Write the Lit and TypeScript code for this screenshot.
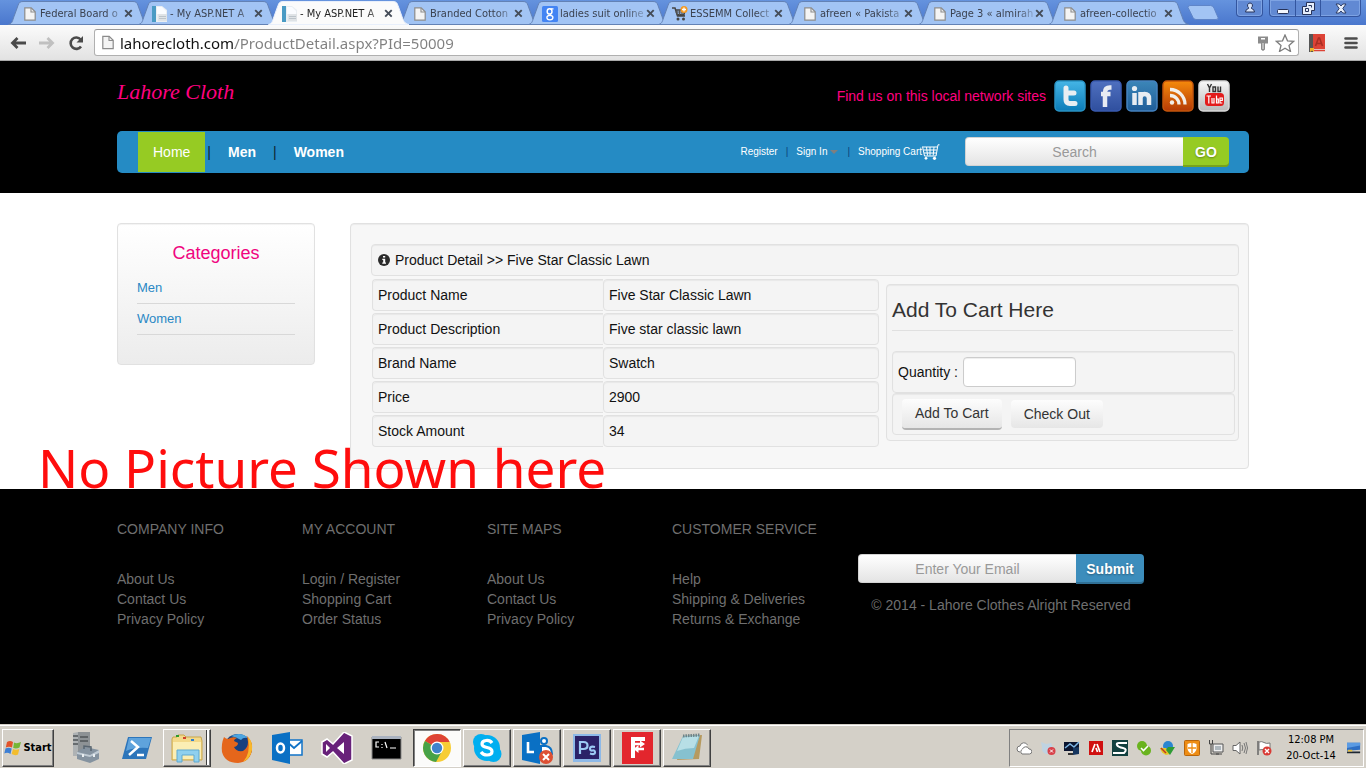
import { LitElement, html, css, svg } from "lit";
import { customElement } from "lit/decorators.js";
import { classMap } from "lit/directives/class-map.js";

const box = (w: number, h: number, body: unknown) =>
  html`<svg width=${w} height=${h} viewBox="0 0 ${w} ${h}" aria-hidden="true">${body}</svg>`;

/* ---------- tab favicons ---------- */
const page = (w = 12, h = 14) => html`<svg width=${w} height=${h} viewBox="0 0 12 14" aria-hidden="true">
  <path d="M.8.8h6.4l4 4v8.4H.8z" fill="#f4f4f4" stroke="#8b8b8b" stroke-width="1.2"/>
  <path d="M7 1v4h4" fill="none" stroke="#8b8b8b" stroke-width="1.1"/></svg>`;
const asp = box(16, 16, svg`
  <path d="M0 0h10l5 4v12H0z" fill="#e9eef2"/><path d="M0 0h4v16H0z" fill="#4a9bc4"/>
  <path d="M5 1h5l4 4v3H5z" fill="#fafcff"/><path d="M6 8h9v7H6z" fill="#dfe3e6"/><path d="M7 10h7v1H7zM7 12h7v1H7z" fill="#bcc4ca"/>`);
const google = box(16, 16, svg`
  <rect width="16" height="16" rx="1.5" fill="#4384f3"/>
  <ellipse cx="7.6" cy="5.4" rx="2.4" ry="2.6" fill="none" stroke="#fff" stroke-width="1.5"/>
  <ellipse cx="7.9" cy="11.6" rx="3" ry="2.2" fill="none" stroke="#fff" stroke-width="1.3"/>
  <path d="M8 8.2l1 1.2M8.5 2.8h3" stroke="#fff" stroke-width="1.2"/>`);
const cartFav = box(16, 16, svg`
  <path d="M0 2h3l2.500 8H13M3.500 4H13l-1 4.500H4.800" fill="none" stroke="#444" stroke-width="1.500"/>
  <path d="M5 4v5M7.500 4v5M10 4v5M3.500 6H13" stroke="#555"/>
  <circle cx="6" cy="13" r="1.500" fill="#444"/><circle cx="11.500" cy="13" r="1.500" fill="#444"/>
  <circle cx="12" cy="3.500" r="3.500" fill="#f59a23"/><path d="M12 1.500v4M10 3.500h4" stroke="#fff" stroke-width="1.300"/>`);

const TABS = [
  { title: "Federal Board o", icon: page() },
  { title: "- My ASP.NET A", icon: asp },
  { title: "- My ASP.NET A", icon: asp, active: true },
  { title: "Branded Cotton", icon: page() },
  { title: "ladies suit online", icon: google },
  { title: "ESSEMM Collect", icon: cartFav },
  { title: "afreen « Pakista", icon: page() },
  { title: "Page 3 « almirah", icon: page() },
  { title: "afreen-collectio", icon: page() },
];

@customElement("browser-chrome")
class BrowserChrome extends LitElement {
  static styles = css`
    :host { display: block; font-family: "DejaVu Sans Condensed", "Noto Sans", sans-serif; }
    svg { display: block; }
    button { border: 0; padding: 0; background: none; display: grid; place-items: center; }
    .strip { display: flex; height: 25px; padding-left: 8px; background: linear-gradient(#6593de, #4a77cd); }
    .tabs { display: flex; }
    .tab { position: relative; width: 130px; height: 25px; display: flex; align-items: center; gap: 2px;
      padding: 2px 5px 0 14px; box-sizing: border-box; font-size: 11px; color: #3b4250; }
    .tab.active { z-index: 2; color: #222; }
    .shape { position: absolute; left: 0; top: 0; width: 143px; height: 25px; }
    .icon { position: relative; flex: none; width: 16px; display: grid; place-items: center; }
    .title { position: relative; flex: 1; white-space: nowrap; line-height: 16px;
      mask-image: linear-gradient(to right, #000 80%, #0004 100%); }
    .close { position: relative; flex: none; width: 9px; height: 9px; }
    .new { margin: 0 0 0 9px; align-self: flex-start; padding-top: 5px; }
    .win { margin-left: auto; display: flex; gap: 6px; padding-right: 5px; height: 17px; }
    .group { display: flex; border: 1px solid #33559f; border-top: 0; border-radius: 0 0 4px 4px; background: #6189d3;
      box-shadow: inset 0 0 0 1px #7ea3e3; }
    .group button { width: 25px; height: 16px; }
    .group .wide { width: 40px; }
    .group button + button { border-left: 1px solid #33559f; }
    .bar { display: flex; align-items: center; height: 36px; box-sizing: border-box; padding: 0 8px;
      background: linear-gradient(#fbfbfb, #e2e2e2); border-bottom: 1px solid #a9a9a9; }
    .nav { width: 20px; height: 20px; margin-right: 9px; }
    .nav:nth-child(3) { margin-right: 8px; }
    .field { flex: 1; display: flex; align-items: center; gap: 6px; height: 27px; box-sizing: border-box; padding: 0 3px 0 7px;
      border: 1px solid #b0b0b0; border-top-color: #989898; border-radius: 3px; background: #fff; }
    .url { flex: 1; border: 0; padding: 0; height: 24px; outline: 0; font: 15px "Noto Sans", sans-serif;
      color: transparent; background: linear-gradient(to right, #111 115px, #808080 115px); background-clip: text; -webkit-background-clip: text; }
    .dict { margin: 0 19px 0 10px; }
  `;

  render() {
    return html`
      <div class="strip">
        <div class="tabs">${TABS.map((t) => html`
          <div class=${classMap({ tab: true, active: !!t.active })}>
            <svg class="shape" viewBox="0 0 143 25" aria-hidden="true">
              <path d="M.5 24.5c4-1 4-4 5.500-8l4-11c1-3 2-4 5-4h110c3 0 4 1 5 4l4 11c1.500 4 2 7 7 8z"
                fill=${t.active ? "#fbfbfb" : "#a2c4f4"} stroke=${t.active ? "#e8effb" : "#6382b5"}/>
            </svg>
            <span class="icon">${t.icon}</span>
            <span class="title">${t.title}</span>
            <button class="close" aria-label="Close tab">${box(9, 9, svg`<path d="M1.200 1.200l6.500 6.500M7.700 1.200l-6.500 6.500" stroke="#444c58" stroke-width="1.900"/>`)}</button>
          </div>`)}
        </div>
        <button class="new" aria-label="New tab">${box(34, 16, svg`<path d="M1 2.500q0-2 2-2h20.500q2.500 0 3.500 2.500l4 9.500q.8 2-2 2H9q-2 0-3-2z" fill="#a2c4f4" stroke="#5f85c8"/>`)}</button>
        <div class="win">
          <div class="group"><button aria-label="Profile">${box(12, 12, svg`<path d="M6 1a2.500 2.500 0 0 1 1.500 4.500v1q3 .8 3 3.500h-9q0-2.700 3-3.500v-1A2.500 2.500 0 0 1 6 1z" fill="#d8e4fa" stroke="#26335a"/>`)}</button></div>
          <div class="group">
            <button aria-label="Minimize">${box(12, 12, svg`<rect x=".5" y="7.500" width="11" height="4" rx="1" fill="#f3f6fd" stroke="#26335a"/>`)}</button>
            <button aria-label="Restore">${box(13, 13, svg`<path d="M4.500.5h8v8h-3v4h-9v-8h4z" fill="#e6eefc" stroke="#26335a"/><path d="M3.500 6.500h3v3h-3zM6.500 3.500h3v2" fill="none" stroke="#26335a"/>`)}</button>
            <button class="wide" aria-label="Close">${box(12, 11, svg`<path d="M1 1h3.200L6 3l1.800-2H11L7.800 5.500 11 10H7.800L6 8l-1.800 2H1l3.200-4.500z" fill="#e6eefc" stroke="#26335a" stroke-width=".9"/>`)}</button>
          </div>
        </div>
      </div>
      <div class="bar">
        <button class="nav" aria-label="Back">${box(18, 16, svg`<path d="M17 8H4M8.500 3L3.500 8l5 5" fill="none" stroke="#4a4a4a" stroke-width="2.800"/>`)}</button>
        <button class="nav" aria-label="Forward">${box(18, 16, svg`<path d="M1 8h13M9.500 3l5 5-5 5" fill="none" stroke="#c0c0c0" stroke-width="2.800"/>`)}</button>
        <button class="nav" aria-label="Reload">${box(18, 18, svg`<path d="M14 12.500a5.700 5.700 0 1 1-.3-7" fill="none" stroke="#4a4a4a" stroke-width="2.600"/><path d="M16 2v6.500H9.500z" fill="#4a4a4a"/>`)}</button>
        <div class="field">
          ${page(12, 15)}
          <input class="url" aria-label="Address" value="lahorecloth.com/ProductDetail.aspx?PId=50009">
          ${box(12, 16, svg`<path d="M1 1.500h10v7H8v6l-2 1.500-2-1.500v-6H1z" fill="#8b8b8b"/><path d="M4 3h4v1.500H4z" fill="#fff"/><path d="M6 8v6" stroke="#eee"/>`)}
          ${box(20, 18, svg`<path d="M10 1l2.500 5.800 6.200.5-4.700 4.100 1.500 6.100L10 14.300l-5.500 3.200L6 11.400 1.300 7.300l6.200-.5z" fill="#fff" stroke="#7d7d7d" stroke-width="1.300"/>`)}
        </div>
        <button class="dict" aria-label="Dictionary">${box(16, 18, svg`<path d="M0 0h4v18H0z" fill="#555"/><path d="M4 0h12v15H4z" fill="#dd4336"/><path d="M5 16.500h11" stroke="#dd4336" stroke-width="1.500"/><path d="M6.500 12l3-8h1l3 8M7.500 9.500h5" fill="none" stroke="#a92e24" stroke-width="1.600"/><path d="M1 14h4v4l-2-1.500L1 18z" fill="#f0b429"/>`)}</button>
        <button aria-label="Menu">${box(14, 14, svg`<path d="M1.500 2.500h11M1.500 7h11M1.500 11.500h11" stroke="#4c4c4c" stroke-width="2.600" stroke-linecap="round"/>`)}</button>
      </div>`;
  }
}

/* ---------- social badges ---------- */
const badge = (id: string, a: string, b: string, edge: string, body: unknown) => box(32, 32, svg`
  <defs><linearGradient id=${id} x2="0" y2="1"><stop stop-color=${a}/><stop offset="1" stop-color=${b}/></linearGradient></defs>
  <rect x="1" y="1" width="30" height="30" rx="4" fill="url(#${id})" stroke=${edge} stroke-width="1.500"/>${body}`);

const SOCIAL = [
  { name: "Twitter", icon: badge("tw", "#45b5e6", "#0b7cb8", "#2a93c4", svg`<path d="M12 8v11.500q0 4 4 4h5M12 13h8" fill="none" stroke="#e8eef2" stroke-width="5" stroke-linecap="round" stroke-linejoin="round"/>`) },
  { name: "Facebook", icon: badge("fb", "#4f70bf", "#2f4f9e", "#3a5bb0", svg`<path d="M15 27V12.500q0-5 5-5h1.500M11 14h9.500" fill="none" stroke="#e8ebf2" stroke-width="4.500"/>`) },
  { name: "LinkedIn", icon: badge("li", "#3c86b8", "#1f5d99", "#4583c0", svg`<path d="M8.500 13v12M14.500 12v13M14.500 18q0-4 4-4 4.500 0 4.500 4.500V25" fill="none" stroke="#e8edf2" stroke-width="4.500"/><circle cx="8.500" cy="8.500" r="2.600" fill="#e8edf2"/>`) },
  { name: "RSS", icon: badge("rs", "#f58a0c", "#b53a06", "#c4560c", svg`<circle cx="10" cy="22.500" r="2.200" fill="#f2eeea"/><path d="M8 15.500a9 9 0 0 1 9 9M8 9.500a15 15 0 0 1 15 15" fill="none" stroke="#f2eeea" stroke-width="3.300"/>`) },
  { name: "YouTube", icon: badge("yt", "#f8f8f8", "#b9b9b9", "#dadada", svg`<rect x="7" y="13" width="19" height="13" rx="3.500" fill="#e31b1b"/>
    <path d="M9.500 4l2 4v4M13.500 4l-2 4M15 7h2.500v4.500H15zM20 6.500v5h2.500v-5" fill="none" stroke="#333" stroke-width="1.400"/>
    <path d="M8.500 16h4.500M10.800 16v7.500M14 18v5h2v-5M18.500 15.500v7.500h1.800v-4h-1.800M22 20.500h2.300V18H22v5h2.300" fill="none" stroke="#fff" stroke-width="1.200"/>`) },
];

const cartIcon = box(18, 16, svg`<path d="M.5 2.500L2.500 12H14L16 .8h1.500M.8 3h14.500M1.500 6h13.300M2 9h12.200M4.500 3l1 8.500M8 3v8.500M12 3l-.8 8.500" fill="none" stroke="#fff"/><circle cx="4" cy="14.300" r="1.400" fill="#fff"/><circle cx="12.500" cy="14.300" r="1.600" fill="#fff"/>`);
const infoIcon = box(12, 12, svg`<circle cx="6" cy="6" r="6" fill="#2b2b2b"/><path d="M5 2h2.200v1.600H5zM4.300 4.800h2.900v3.600H8V9.700H4.300V8.400h.9V6h-.9z" fill="#fff"/>`);

const DETAILS: [string, string][] = [
  ["Product Name", "Five Star Classic Lawn"],
  ["Product Description", "Five star classic lawn"],
  ["Brand Name", "Swatch"],
  ["Price", "2900"],
  ["Stock Amount", "34"],
];

const COLUMNS = [
  { head: "COMPANY INFO", links: ["About Us", "Contact Us", "Privacy Policy"] },
  { head: "MY ACCOUNT", links: ["Login / Register", "Shopping Cart", "Order Status"] },
  { head: "SITE MAPS", links: ["About Us", "Contact Us", "Privacy Policy"] },
  { head: "CUSTOMER SERVICE", links: ["Help", "Shipping & Deliveries", "Returns & Exchange"] },
];

@customElement("shop-page")
class ShopPage extends LitElement {
  static styles = css`
    :host { display: flex; flex-direction: column; background: #fff; color: #111;
      font: 14px/20px "Liberation Sans", Arial, sans-serif; }
    svg { display: block; }
    a { color: inherit; text-decoration: none; }
    h1, h2, h3, ul, p { margin: 0; padding: 0; font-weight: 400; list-style: none; }
    input, button { font: inherit; margin: 0; box-sizing: border-box; }
    .wrap { max-width: 1132px; margin: 0 auto; }
    .head { background: #000; padding: 0 20px 20px; }
    .top { display: flex; align-items: center; justify-content: space-between; height: 70px; padding-right: 19px; }
    .logo { font: italic 22px/30px "Liberation Serif", serif; color: #ff0080; padding-bottom: 8px; }
    .social { display: flex; align-items: center; gap: 4px; color: #ff0080; }
    .social span { margin-right: 4px; }
    .nav { display: flex; align-items: center; height: 42px; padding: 0 20px; background: #258bc4; border-radius: 5px; }
    .nav a { color: #fff; }
    .menu { display: flex; align-items: center; font-weight: 700; }
    .menu a { padding: 0 15px; line-height: 40px; }
    .menu a.on { background: #96cb23; font-weight: 400; margin-left: 1px; }
    .sep { color: #0d2230; font-weight: 400; padding: 0 2px; }
    .user { display: flex; align-items: center; gap: 6px; margin-left: auto; font-size: 10px; }
    .user a { display: flex; align-items: center; }
    .user .sep { color: #0b3f7a; }
    .caret { border: 4px solid transparent; border-top-color: #7f7f7f; border-bottom: 0; margin: 0 1px 0 3px; }
    .combo { display: flex; }
    .combo input { width: 218px; height: 29px; border: 1px solid #d3d3d3; border-right: 0; border-radius: 4px 0 0 4px; padding: 0 8px;
      text-align: center; background: linear-gradient(#fff, #e4e4e4); outline: 0; }
    .combo input::placeholder { color: #999; opacity: 1; }
    .combo button { height: 30px; border: 0; border-radius: 0 4px 4px 0; padding: 0; font-weight: 700; color: #fff;
      text-shadow: 0 1px 2px #0005; box-shadow: inset 0 -2px #0003; }
    .go { width: 46px; background: #96cb23; }
    .send { width: 68px; background: #3c8dbc; }
    .nav .combo { margin-left: 25px; }
    .body { position: relative; padding: 30px 20px 20px; }
    .cols { display: grid; grid-template-columns: 198px 1fr; gap: 35px; align-items: start; }
    .well { border: 1px solid #e1e1e1; border-radius: 4px; box-shadow: inset 0 1px 1px #0000000d; box-sizing: border-box; }
    .side { padding: 19px 19px 29px; background: linear-gradient(#fff, #ececec); }
    .side h2 { font-size: 18px; text-align: center; color: #f0047f; }
    .side ul { padding-top: 10px; }
    .side li { font-size: 13px; line-height: 30px; border-bottom: 1px solid #d8d8d8; color: #2a88c5; }
    .panel { padding: 20px 9px 19px 20px; background: #f7f7f7; }
    .crumb { display: flex; align-items: center; gap: 5px; height: 32px; padding: 0 6px; background: #f4f4f4; }
    .split { display: grid; grid-template-columns: 507px 1fr; gap: 7px; align-items: start; padding-left: 1px; }
    table { border-collapse: separate; border-spacing: 0 2px; width: 100%; margin-top: 1px; table-layout: fixed; }
    th, td { height: 30px; padding: 0 5px; border: 1px solid #e1e1e1; background: #f4f4f4; text-align: left; font-weight: 400;
      box-shadow: inset 0 1px 1px #0000000d; }
    th { width: 220px; border-right: 0; border-radius: 4px 0 0 4px; }
    td { border-radius: 4px; }
    .cart { margin-top: 8px; padding: 15px 3px 5px 5px; background: #f4f4f4; }
    .cart h3 { font-size: 21px; color: #333; padding-bottom: 10px; margin: 0 2px 20px 0; border-bottom: 1px solid #e0e0e0; }
    .row { display: flex; align-items: center; height: 42px; padding: 0 5px; gap: 5px; }
    .qty { width: 113px; height: 30px; border: 1px solid #ccc; border-radius: 4px; background: #fff; padding: 4px 6px; box-shadow: inset 0 1px 1px #00000013; }
    .acts { gap: 9px; padding: 0 9px; }
    .btn { border: 0; border-radius: 4px; padding: 0 13px; color: #333; height: 28px; background: linear-gradient(#fdfdfd, #e6e6e6); }
    .btn.main { height: 31px; border-bottom: 2px solid #b3b3b3; }
    .note { position: absolute; left: 38px; bottom: -14px; font: 53px/70px "Noto Sans", sans-serif; color: #ff0d0d; white-space: nowrap; }
    .foot { flex: 1; background: #000; color: #6f6f6f; padding: 30px 20px; }
    .fcols { display: grid; grid-template-columns: repeat(4, 185px) 288px; }
    .fcols h3 { font-size: 14px; padding-bottom: 30px; }
    .mail { padding-top: 35px; text-align: center; }
    .mail .combo { padding-left: 1px; }
    .mail p { padding-top: 11px; }
  `;

  render() {
    return html`
      <header class="head"><div class="wrap">
        <div class="top">
          <h1 class="logo">Lahore Cloth</h1>
          <div class="social"><span>Find us on this local network sites</span>
            ${SOCIAL.map((s) => html`<a href="#" aria-label=${s.name}>${s.icon}</a>`)}</div>
        </div>
        <nav class="nav">
          <div class="menu"><a class="on" href="#">Home</a><span class="sep">|</span><a href="#">Men</a><span class="sep">|</span><a href="#">Women</a></div>
          <div class="user"><a href="#">Register</a><span class="sep">|</span><a href="#">Sign In<i class="caret"></i></a><span class="sep">|</span><a href="#">Shopping Cart ${cartIcon}</a></div>
          <form class="combo"><input aria-label="Search" placeholder="Search"><button type="button" class="go">GO</button></form>
        </nav>
      </div></header>
      <main class="body">
        <div class="wrap cols">
          <aside class="well side"><h2>Categories</h2><ul><li><a href="#">Men</a></li><li><a href="#">Women</a></li></ul></aside>
          <section class="well panel">
            <div class="well crumb">${infoIcon}<span>Product Detail &gt;&gt; Five Star Classic Lawn</span></div>
            <div class="split">
              <table><tbody>${DETAILS.map(([k, v]) => html`<tr><th scope="row">${k}</th><td>${v}</td></tr>`)}</tbody></table>
              <form class="well cart">
                <h3>Add To Cart Here</h3>
                <div class="well row"><label for="qty">Quantity :</label><input id="qty" class="qty"></div>
                <div class="well row acts"><button type="button" class="btn main">Add To Cart</button><button type="button" class="btn">Check Out</button></div>
              </form>
            </div>
          </section>
        </div>
        <p class="note">No Picture Shown here</p>
      </main>
      <footer class="foot"><div class="wrap fcols">
        ${COLUMNS.map((c) => html`<div><h3>${c.head}</h3><ul>${c.links.map((l) => html`<li><a href="#">${l}</a></li>`)}</ul></div>`)}
        <div class="mail"><form class="combo"><input type="email" aria-label="Email" placeholder="Enter Your Email"><button type="button" class="send">Submit</button></form>
          <p>© 2014 - Lahore Clothes Alright Reserved</p></div>
      </div></footer>`;
  }
}

/* ---------- taskbar ---------- */
const APPS: { name: string; state?: string; icon: unknown }[] = [
  { name: "Server Manager", icon: svg`<path d="M2 1l5-1h12v24H2z" fill="#aeb2b4"/><path d="M7 0h12v24H7z" fill="#8d9295"/><path d="M2 4h5M2 8h5M2 12h5M9 5h8M9 9h8" stroke="#505558" stroke-width="1.500"/><path d="M6 20l8-5 14 3v9l-9 4-13-4z" fill="#8593a0"/><path d="M6 20l13 3 9-5v3l-9 4-13-3z" fill="#c0cbd4"/><path d="M13 17v-3l7 1v4" fill="none" stroke="#586570" stroke-width="1.500"/><path d="M12 22v3M23 22v3" stroke="#e8edf0" stroke-width="2"/>` },
  { name: "PowerShell", icon: svg`<path d="M7 5h24l-6 22H1z" fill="#2d75ba"/><path d="M8 6h22l-3 10Q14 15 5 19z" fill="#5fa3dc"/><path d="M10 9l7 6-9 8M16 23h7" fill="none" stroke="#fff" stroke-width="2.500"/>` },
  { name: "Explorer", state: "stack", icon: svg`<path d="M2 5h4l1-2h6l2 2h15l1 4v19H1V7z" fill="#f3d98a" stroke="#c9a74a"/><path d="M2 10h28v17H2z" fill="#fbeeb4"/><path d="M5 3h3v2H5z" fill="#2c9b2c"/><path d="M12 5h3v2h-3z" fill="#d0402c"/><path d="M20 7h3v2h-3z" fill="#2e7fd0"/><path d="M6 30V18h22v12h-5v-7H11v7z" fill="#8fd0ee" stroke="#5ea9d0"/>` },
  { name: "Firefox", icon: svg`<circle cx="17" cy="16" r="14" fill="#17407f"/><path d="M10 4q10-5 17 2-5-1-7 2-5-3-10-4z" fill="#4da5e0"/><path d="M3 5q2 2 4 2 5-3 9-1-3 1-3 3l4 2q0 3-4 4 2 5 9 4 5-3 5-9l-1-6q6 6 5 14-2 12-14 13Q4 31 1 20 0 12 3 5z" fill="#e5661b"/><path d="M27 5q5 5 4 13-2 9-9 12 8-8 5-25z" fill="#f8b72b"/>` },
  { name: "Outlook", icon: svg`<path d="M14 8h17v15H14z" fill="#fff" stroke="#1173c7" stroke-width="1.500"/><path d="M15 9l8 7 8-7" fill="none" stroke="#1173c7" stroke-width="1.800"/><path d="M1 3l18-3v32L1 28z" fill="#0a70c4"/><ellipse cx="9.500" cy="16" rx="3.500" ry="4.500" fill="none" stroke="#fff" stroke-width="2.500"/>` },
  { name: "Visual Studio", icon: svg`<path d="M23 0l8 4v24l-8 4L12 20l-6 5-5-3V10l5-3 6 5z" fill="#68217a" stroke="#fff" stroke-width="1.500"/><path d="M5 12v8l4-4zM23 10v12l-7-6z" fill="#fff"/>` },
  { name: "Command Prompt", icon: svg`<path d="M1 5h29v22H1z" fill="#000" stroke="#888"/><path d="M1 4h29v3H1z" fill="#aab2bf"/><path d="M8 10H5v5h3M11 12v1M11 15v1M14 10l2 6M19 16h6" fill="none" stroke="#fff" stroke-width="1.200"/>` },
  { name: "Chrome", state: "down", icon: svg`<circle cx="16" cy="16" r="14" fill="#f7cd35"/><path d="M16 16L3.900 9A14 14 0 0 1 28.600 10H16z" fill="#de4335"/><path d="M3.900 9A14 14 0 0 0 15 30l6-11-5-3z" fill="#47a247"/><circle cx="16" cy="16" r="6.500" fill="#fff"/><circle cx="16" cy="16" r="5.200" fill="#3f83cc"/>` },
  { name: "Skype", state: "open", icon: svg`<circle cx="16" cy="16" r="13" fill="#00aff0"/><circle cx="10" cy="10" r="8" fill="#00aff0"/><circle cx="22.500" cy="22" r="8" fill="#00aff0"/><path d="M21 11q-2-3-6-2.500-4 .5-4 3.500 0 2.500 5 3.500t5 4q0 3.500-5 3.500-4 0-6-3" fill="none" stroke="#fff" stroke-width="3.200"/>` },
  { name: "Lync", state: "open", icon: svg`<path d="M1 3l18-3v32L1 28z" fill="#0a70c4"/><path d="M7 10v10h6" fill="none" stroke="#fff" stroke-width="2.600"/><circle cx="23" cy="9" r="3" fill="#fff" stroke="#0a70c4" stroke-width="2"/><path d="M20 14h5q6 1 6 8l-4 4h-7z" fill="#fff" stroke="#0a70c4" stroke-width="2"/><circle cx="25" cy="25" r="7" fill="#dd5033"/><path d="M22 22l6 6M28 22l-6 6" stroke="#fff" stroke-width="2"/>` },
  { name: "Photoshop", state: "open", icon: svg`<path d="M2 2h28v28H2z" fill="#8db9e8"/><path d="M4 4h24v23H4z" fill="#2b2268"/><path d="M9 22V10h3.500q4 0 4 3.500t-4 3.500H9M24 15q-5-1-5 1.500t2.500 2 2.500 2-5 1" fill="none" stroke="#9ccbf5" stroke-width="2.200"/>` },
  { name: "FileZilla", state: "open", icon: svg`<path d="M1 0h31v32H1z" fill="#e3262d"/><path d="M10 5h14v4H14v17h-4z" fill="#fff"/><path d="M14 12h6M15 17h8" stroke="#fff" stroke-width="2.500"/><path d="M19 8.500l5 3.500-5 3.500zM17.500 13l-5 4 5 4z" fill="#fff"/>` },
  { name: "Notepad", state: "open", icon: svg`<path d="M12 4l19-1-3 24-22 1z" fill="#b69a5f"/><path d="M12 4l17-1-7 24H1z" fill="#86c1cf"/><path d="M12 5l16-1-5 12q-9 0-17 3z" fill="#b7dfe6"/><path d="M12 4l17-1" stroke="#6f8388" stroke-width="3" stroke-dasharray="1.500 1"/>` },
];

const TRAY: { name: string; icon: unknown }[] = [
  { name: "OneDrive", icon: svg`<path d="M4 12a3 3 0 0 1 0-6 4 4 0 0 1 7.500-1" fill="#fff" stroke="#777"/><path d="M6 14a3 3 0 0 1 .5-5 3.500 3.500 0 0 1 6.500 0 2.500 2.500 0 0 1 .5 5z" fill="#fff" stroke="#777"/>` },
  { name: "Cloud sync", icon: svg`<path d="M1 2l5 2 5-1 2 5-3 6H6Q1 12 2 7z" fill="#bfd3e2"/><circle cx="11.500" cy="11" r="4" fill="#d8414a"/><path d="M10 9.500l3 3M13 9.500l-3 3" stroke="#fff"/>` },
  { name: "Display", icon: svg`<path d="M0 2h15v9H0z" fill="#0b1530"/><path d="M1 8l5-4 4 3 5-5" fill="none" stroke="#7db7e6" stroke-width="1.500"/><path d="M9 8l6-1v7l-6 1z" fill="#16365f"/><path d="M4 13h5v2H4z" fill="#333"/>` },
  { name: "Adobe", icon: svg`<path d="M1 1h14v14H1z" fill="#d01010"/><path d="M4 12l3-8M12 12L9 4M8 8l1.500 4" stroke="#fff" stroke-width="1.700"/>` },
  { name: "Sync tool", icon: svg`<path d="M0 0h16v16H0z" fill="#12403f"/><path d="M15 3H7Q4 3 5 5t6 3 1 5H1" fill="none" stroke="#fff" stroke-width="2"/>` },
  { name: "Skype for work", icon: svg`<circle cx="6" cy="6" r="5" fill="#69b31e"/><circle cx="10" cy="10.500" r="5" fill="#69b31e"/><path d="M5 8l2.500 2.500L12 6" fill="none" stroke="#fff" stroke-width="1.600"/>` },
  { name: "Download manager", icon: svg`<circle cx="8" cy="6" r="5" fill="#2b86d0"/><path d="M0 8h6l4 6-4 1Q1 13 0 8z" fill="#e6c628"/><path d="M8 7h7l-5 8-4-5z" fill="#2f9c35"/><path d="M1 8l5 5" stroke="#c03a20" stroke-width="1.500"/>` },
  { name: "Security", icon: svg`<rect x=".5" y=".5" width="15" height="15" rx="1" fill="#ee8d14" stroke="#b9650a"/><path d="M3.500 4q4.500-2 9 0v4q0 4-4.500 6-4.500-2-4.500-6z" fill="#fff"/><path d="M8 3v10M4 8h8" stroke="#ee8d14" stroke-width="1.300"/>` },
  { name: "Network", icon: svg`<path d="M5 4h10v8H5z" fill="#eee" stroke="#555"/><path d="M7 6h6v4H7z" fill="#aeb7bd"/><path d="M1.500 0v4h3V0M3 4v10h8M8 14h6" fill="none" stroke="#444"/>` },
  { name: "Volume", icon: svg`<path d="M1 5.500h3L8 2v12l-4-3.500H1z" fill="#fff" stroke="#666"/><path d="M10 5q1.500 3 0 6M12 3q3 5 0 10M14 2q3 6 0 12" fill="none" stroke="#777"/>` },
  { name: "Action Center", icon: svg`<path d="M2 1v14" stroke="#666" stroke-width="1.500"/><path d="M3 2q3-1 5 .5t6 .5v7q-3 1-5.500 0T3 10z" fill="#fff" stroke="#777"/><circle cx="11" cy="11" r="4.500" fill="#d93a34"/><path d="M9 9l4 4M13 9l-4 4" stroke="#fff" stroke-width="1.400"/>` },
];

@customElement("task-bar")
class TaskBar extends LitElement {
  static styles = css`
    :host { display: flex; align-items: center; height: 44px; box-sizing: border-box; padding: 2px 2px 0; background: #d4d0c8;
      border-top: 1px solid #d4d0c8; box-shadow: inset 0 1px #fff; font-family: "DejaVu Sans Condensed", "Noto Sans", sans-serif; }
    svg { display: block; }
    button { box-sizing: border-box; height: 38px; padding: 0; border: 1px solid transparent; background: none; color: #000;
      font: inherit; display: flex; align-items: center; justify-content: center; }
    .raised { border-color: #fff #404040 #404040 #fff; box-shadow: inset -1px -1px #808080; }
    .stack { box-shadow: inset -1px -1px #808080, inset -3px 0 #fff, inset -4px 0 #404040; }
    .start { width: 52px; gap: 1px; font-size: 11px; font-weight: 700; margin-right: 9px; }
    .apps { display: flex; gap: 2px; }
    .apps button { width: 48px; }
    .down { border-color: #404040 #fff #fff #404040; box-shadow: inset 1px 1px #808080; background: #fbfbfa; }
    .tray { margin-left: auto; display: flex; align-items: center; height: 38px; box-sizing: border-box; padding: 0 1px 0 2px; border: 1px solid; border-color: #808080 #fff #fff #808080; }
    .tray button { width: 24px; height: 24px; }
    .clock { width: 70px; text-align: center; font-size: 11px; line-height: 16px; white-space: nowrap; }
    .tray .desk { width: 16px; }
  `;

  render() {
    return html`
      <button class="raised start">${box(18, 16, svg`<path d="M3 2q3-2 6 0L8 7.500Q5 6 1.800 7.500z" fill="#e2532b"/><path d="M10 2.500q3 1.500 7-.5l-1.500 5.500q-3 1.500-6.300.5z" fill="#76b636"/><path d="M1.500 8.500q3-1.500 6.200 0L6.500 14q-3-2-6.200-.5z" fill="#3d7fd4"/><path d="M9 9q3 1.500 6.300 0L14 14.500q-3 1.500-6.300-.5z" fill="#f3bd2e"/>`)}Start</button>
      <div class="apps">${APPS.map((a) => html`<button aria-label=${a.name} class=${classMap({ raised: a.state === "open" || a.state === "stack", stack: a.state === "stack", down: a.state === "down" })}>${box(32, 32, a.icon)}</button>`)}</div>
      <div class="tray">
        ${TRAY.map((t) => html`<button aria-label=${t.name}>${box(16, 16, t.icon)}</button>`)}
        <div class="clock">12:08 PM<br>20-Oct-14</div>
        <button class="desk" aria-label="Show desktop">${box(16, 14, svg`<path d="M0 1h15v8l-15 1z" fill="#2e6fc4"/><path d="M0 1h15v3L0 7z" fill="#5b9be3"/><path d="M0 11h15v2H0z" fill="#1d2733"/><path d="M1 9h5v2H1z" fill="#e8c13a"/>`)}</button>
      </div>`;
  }
}

@customElement("app-root")
class AppRoot extends LitElement {
  static styles = css`
    :host { display: flex; flex-direction: column; min-height: 100vh; }
    shop-page { flex: 1; }
  `;
  render() {
    return html`<browser-chrome></browser-chrome><shop-page></shop-page><task-bar></task-bar>`;
  }
}
